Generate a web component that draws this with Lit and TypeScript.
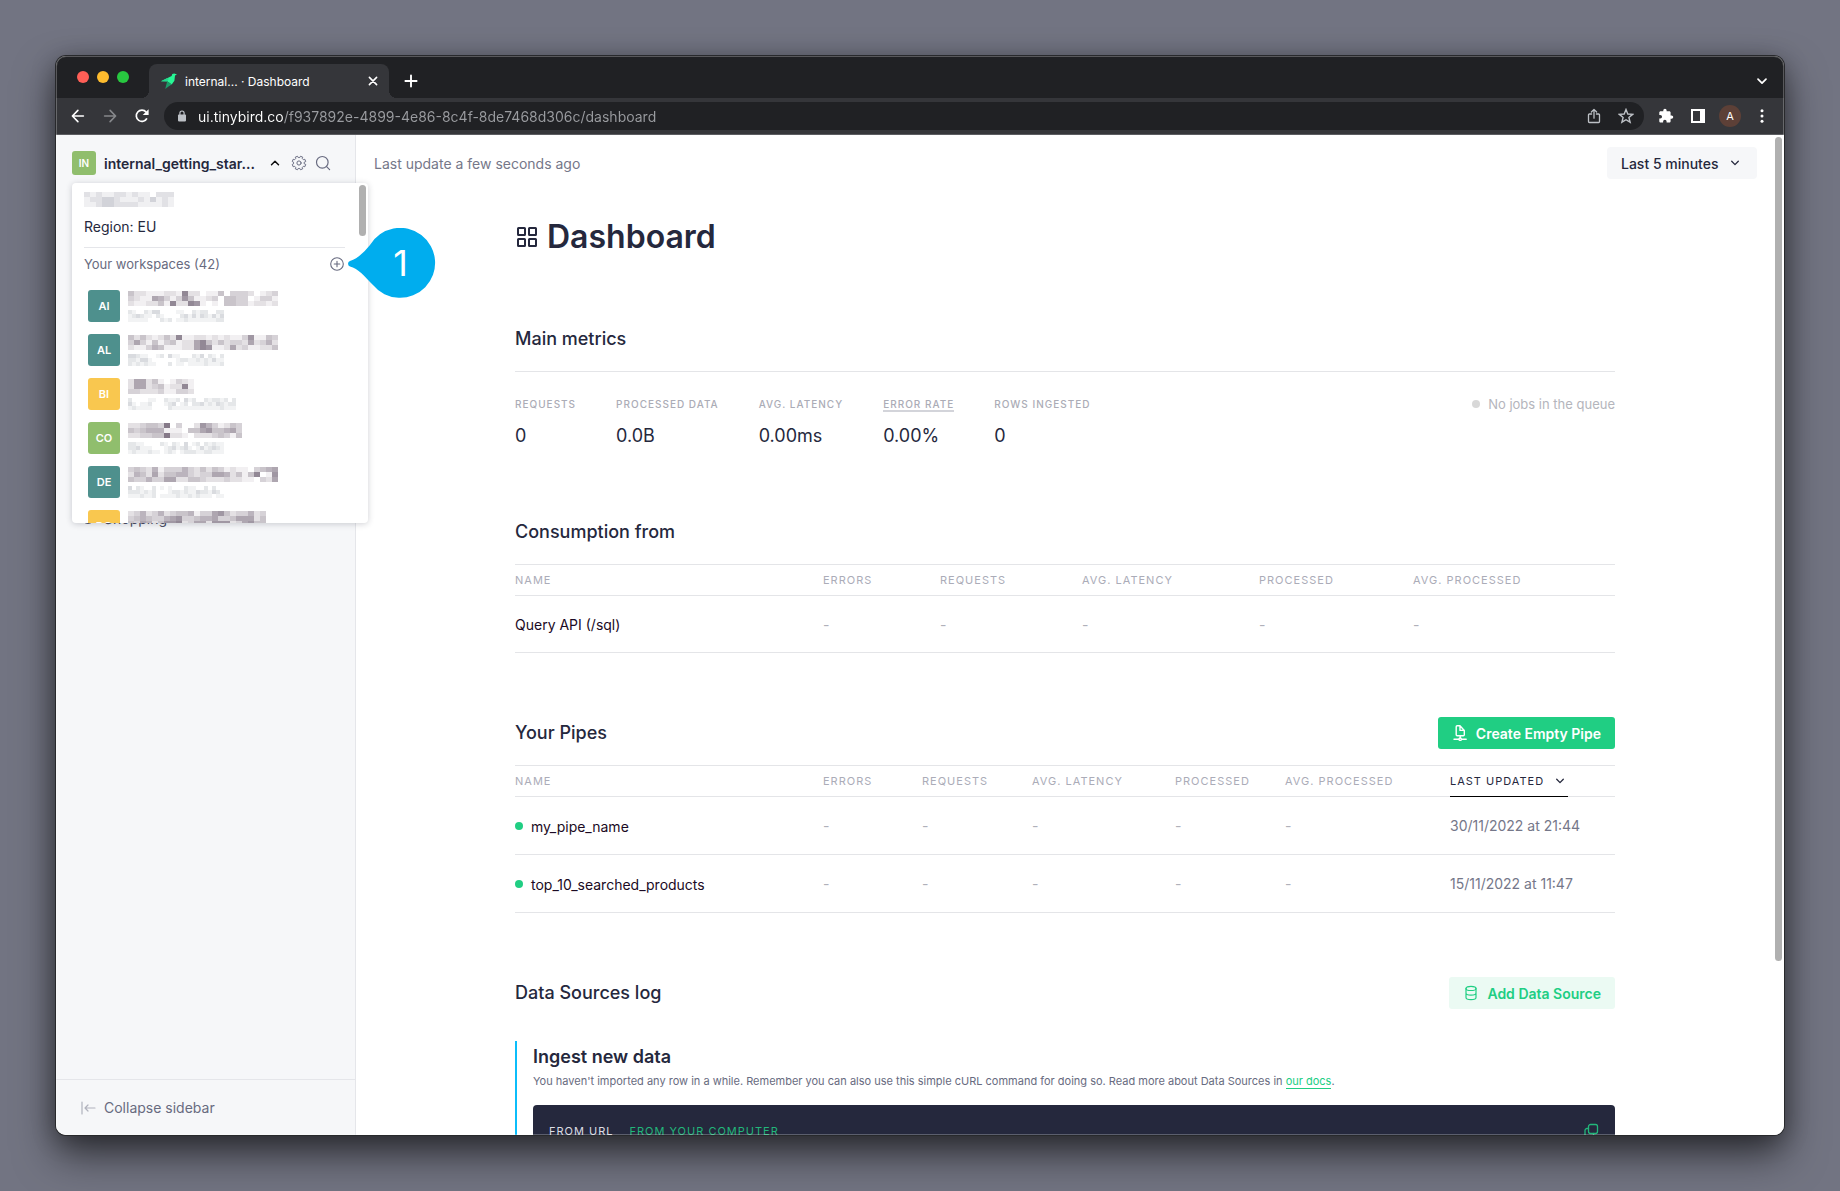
import { LitElement, html, css, svg, nothing } from "lit";
import { customElement, property } from "lit/decorators.js";

/* ---------- data ---------- */

interface Workspace {
  initials: string;
  tone: string;
  name: string[];
  detail: string[];
}

const workspaces: Workspace[] = [
  {
    initials: "AI",
    tone: "teal",
    name: ["4221112218220114033320123", "3211653137411230443301331", "2112241822871010443312212"],
    detail: ["210021330000110021220022", "123211021000023131321313", "111110002120112111111122"],
  },
  {
    initials: "AL",
    tone: "teal",
    name: ["4242124281122121211371143", "3631413412268424233262352", "2113541112268711262311224"],
    detail: ["332110012031100021302102", "221331000000122112121311", "212121100020110111121112"],
  },
  {
    initials: "BI",
    tone: "yellow",
    name: ["26624101321", "26623412281", "33222311332"],
    detail: ["200001100211203120021221202", "310112000123012022312132122", "121111000021111111111112111"],
  },
  {
    initials: "CO",
    tone: "green",
    name: ["2234439030027531243", "4345551110446744563", "2233449221022234314"],
    detail: ["221100002102103012021211", "223111000123123101312321", "121112110121012221122111"],
  },
  {
    initials: "DE",
    tone: "teal",
    name: ["3432513335324243121103456", "2542624455323366524148017", "4335336622443222322110326"],
    detail: ["302100201010002110020200", "222121200012212113221320", "111211201111211212111011"],
  },
  {
    initials: "DO",
    tone: "yellow",
    name: ["23523523445133674233523", "34543356733455633466624", "43652477823662777236744"],
    detail: ["302100201010002110020200", "222121200012212113221320", "111211201111211212111011"],
  },
];

const metrics = [
  { label: "Requests", value: "0" },
  { label: "Processed data", value: "0.0B" },
  { label: "Avg. latency", value: "0.00ms" },
  { label: "Error rate", value: "0.00%", hint: true },
  { label: "Rows ingested", value: "0" },
];

const consumptionColumns = [
  { label: "Name", share: 308 },
  { label: "Errors", share: 117 },
  { label: "Requests", share: 142 },
  { label: "Avg. latency", share: 177 },
  { label: "Processed", share: 154 },
  { label: "Avg. processed", share: 202 },
];

const pipeColumns = [
  { label: "Name", share: 308 },
  { label: "Errors", share: 99 },
  { label: "Requests", share: 110 },
  { label: "Avg. latency", share: 143 },
  { label: "Processed", share: 110 },
  { label: "Avg. processed", share: 165 },
  { label: "Last updated", share: 165, sorted: true },
];

const pipes = [
  { name: "my_pipe_name", updated: "30/11/2022 at 21:44" },
  { name: "top_10_searched_products", updated: "15/11/2022 at 11:47" },
];

/* ---------- icons ---------- */

const stroke = (body: unknown, size = 16, width = 1) => html`<svg
  class="icon" width=${size} height=${size} viewBox="0 0 16 16" fill="none" stroke="currentColor"
  stroke-width=${width} stroke-linecap="round" stroke-linejoin="round" aria-hidden="true">${body}</svg>`;
const solid = (body: unknown, size = 16) => html`<svg
  class="icon" width=${size} height=${size} viewBox="0 0 16 16" fill="currentColor" aria-hidden="true">${body}</svg>`;

const gearPath = (() => {
  const teeth = 8;
  const points: string[] = [];
  for (let i = 0; i < teeth; i++) {
    const base = ((i + 0.5) / teeth) * Math.PI * 2;
    for (const [offset, radius] of [[-0.25, 5.5], [-0.18, 6.9], [0.18, 6.9], [0.25, 5.5]]) {
      points.push(`${(8 + radius * Math.cos(base + offset)).toFixed(2)} ${(8 + radius * Math.sin(base + offset)).toFixed(2)}`);
    }
  }
  return `M${points.join("L")}Z`;
})();

const icons = {
  back: stroke(svg`<path d="M13.4 8H2.6M7.9 2.4L2.4 8l5.5 5.6"/>`, 16, 1.6),
  forward: stroke(svg`<path d="M2.6 8h10.8M8.1 2.4L13.6 8l-5.5 5.6"/>`, 16, 1.6),
  reload: html`<svg class="icon" width="16" height="16" viewBox="0 0 16 16" aria-hidden="true">
    <path d="M12.9 10.3A5.6 5.6 0 1 1 12.2 4.2" fill="none" stroke="currentColor" stroke-width="1.7"/>
    <path d="M14.6 1.2v5.9H8.7z" fill="currentColor"/></svg>`,
  lock: html`<svg class="icon" width="10" height="12" viewBox="0 0 10 12" aria-hidden="true">
    <rect x="1" y="4.6" width="8" height="6.8" rx=".8" fill="currentColor"/>
    <path d="M2.9 5V3.1a2.1 2.1 0 0 1 4.2 0V5" fill="none" stroke="currentColor" stroke-width="1.2"/></svg>`,
  close: stroke(svg`<path d="M4.4 4.4l7.2 7.2M11.6 4.4l-7.2 7.2"/>`, 16, 1.6),
  plus: stroke(svg`<path d="M8 2.4v11.2M2.4 8h11.2"/>`, 16, 1.9),
  chevronBold: stroke(svg`<path d="M4 6.2l4 4 4-4"/>`, 16, 1.7),
  chevronDown: stroke(svg`<path d="M4.7 6.3L8 9.6l3.3-3.3"/>`, 16, 1.3),
  chevronUp: stroke(svg`<path d="M4.5 9.8L8 6.3l3.5 3.5"/>`, 16, 1.5),
  share: stroke(svg`<path d="M5.6 6H3.4a.9.9 0 0 0-.9.9v6.7c0 .5.4.9.9.9h9.2c.5 0 .9-.4.9-.9V6.900a.9.9 0 0 0-.9-.9h-2.200M8 10.200V1.500M5.400 4L8 1.400 10.600 4"/>`, 16, 1.3),
  star: stroke(svg`<path stroke-linejoin="miter" d="M8 1.500l1.800 4.500 4.800.4-3.700 3.100 1.200 4.700L8 11.700l-4.100 2.500 1.200-4.700L1.400 6.400l4.800-.4z"/>`, 16, 1.4),
  puzzle: solid(svg`<path d="M13.600 7.400h-1V4.600c0-.7-.6-1.300-1.300-1.300H8.600v-1a1.650 1.650 0 0 0-3.300 0v1H2.600c-.7 0-1.300.6-1.300 1.300v2.500h1a1.750 1.750 0 0 1 0 3.500h-1v2.600c0 .7.6 1.300 1.300 1.300h2.500v-1a1.750 1.750 0 0 1 3.500 0v1h2.700c.7 0 1.300-.6 1.300-1.300v-2.500h1a1.650 1.650 0 0 0 0-3.300z"/>`),
  panel: html`<svg class="icon" width="14" height="14" viewBox="0 0 14 14" aria-hidden="true">
    <path d="M0 0h14v14H0zM2 2v10h7V2z" fill="currentColor" fill-rule="evenodd"/></svg>`,
  dots: solid(svg`<circle cx="8" cy="2.700" r="1.500"/><circle cx="8" cy="8" r="1.500"/><circle cx="8" cy="13.300" r="1.500"/>`),
  gear: stroke(svg`<path d=${gearPath}/><circle cx="8" cy="8" r="2.100"/>`, 16, 1),
  search: stroke(svg`<circle cx="7.300" cy="7.300" r="5.800"/><path d="M11.600 11.600L14.600 14.600"/>`, 16, 1.2),
  addCircle: stroke(svg`<circle cx="8" cy="8" r="6.300"/><path d="M8 5.200v5.600M5.200 8h5.600"/>`, 16, 1.1),
  node: stroke(svg`<circle cx="8" cy="8" r="5.500"/><path d="M5.500 8h5"/>`, 16, 1.1),
  collapse: stroke(svg`<path d="M2 2v12M15 8H5M8 5L5 8l3 3"/>`, 16, 1.2),
  grid: html`<svg class="icon" width="24" height="24" viewBox="0 0 24 24" fill="none" stroke="currentColor" stroke-width="2" aria-hidden="true">
    <rect x="3" y="3" width="7" height="7" rx=".5"/><rect x="14" y="3" width="7" height="7" rx=".5"/>
    <rect x="3" y="14" width="7" height="7" rx=".5"/><rect x="14" y="14" width="7" height="7" rx=".5"/></svg>`,
  pipe: stroke(svg`<path d="M12.300 5.400v4.400c0 .5-.4.900-.9.900H5.100a.9.900 0 0 1-.9-.9V1.700c0-.5.400-.9.900-.9h2.900zM8 .900v4.500h4.200M8.200 10.800v2.100M2 14.200h4.700M9.700 14.200h4.500"/><circle cx="8.200" cy="14.200" r="1.200"/>`, 16, 1.4),
  database: stroke(svg`<ellipse cx="8" cy="3.400" rx="5" ry="2.100"/><path d="M3 3.400v9.200c0 1.200 2.200 2.100 5 2.100s5-.9 5-2.100V3.400M3 8c0 1.200 2.200 2.100 5 2.100s5-.9 5-2.100"/>`, 16, 1.2),
  copy: stroke(svg`<rect x="5.500" y="1.500" width="9" height="9" rx="2"/><path d="M5.500 5.500H4a2 2 0 0 0-2 2V12a2 2 0 0 0 2 2h4.500a2 2 0 0 0 2-2v-1.500"/>`, 16, 1.3),
  bird: html`<svg class="icon" width="18" height="18" viewBox="0 0 18 18" aria-hidden="true">
    <path d="M1 9.200L11.600 4 12.300 2.100 14.200 1.400 17 2.400l-2 1.200-.6 5.200-2.700 3.800-4.500-3.400z" fill="#27f795"/>
    <path d="M7.200 9.200l4.500 3.400-3.200 1.800L5.200 17z" fill="#1d9a68"/>
    <path d="M1 9.200l6.400-3.100 1.400.6-1.600 2.800z" fill="#25d58c"/></svg>`,
};

/* ---------- mosaic ---------- */

@customElement("tb-mosaic")
class Mosaic extends LitElement {
  static styles = css`
    :host { display: block; line-height: 0; }
  `;

  @property({ attribute: false }) rows: string[] = [];
  @property({ type: Number }) cellWidth = 6;
  @property({ type: Number }) cellHeight = 5;
  @property() dark = "133,121,136";

  render() {
    const [cw, ch] = [this.cellWidth, this.cellHeight];
    const width = (this.rows[0]?.length ?? 0) * cw;
    return html`<svg width=${width} height=${this.rows.length * ch} shape-rendering="crispEdges" aria-hidden="true">
      ${this.rows.map((row, y) => [...row].map((level, x) => level === "0" ? nothing : svg`<rect
        x=${x * cw} y=${y * ch} width=${cw} height=${ch}
        fill=${`rgba(${this.dark},${Number(level) / 9})`}/>`))}
    </svg>`;
  }
}

/* ---------- browser frame ---------- */

const reset = css`
  * { box-sizing: border-box; }
  button, input, select {
    margin: 0; padding: 0; border: 0; background: none; color: inherit;
    font: inherit; letter-spacing: inherit; text-transform: inherit; outline: none;
  }
  button { display: inline-flex; align-items: center; cursor: pointer; }
  a { color: inherit; text-decoration: none; }
  h1, h2, h3, p, ul, dl, dd, dt { margin: 0; padding: 0; }
  ul { list-style: none; }
  .icon { display: block; flex: none; }
`;

@customElement("browser-chrome")
class BrowserChrome extends LitElement {
  static styles = [reset, css`
    :host { display: block; color: #fff; border-bottom: 1px solid #5c5d61; }
    .strip { display: flex; align-items: flex-end; height: 42px; background: #202124; padding: 0 14px 0 21px; }
    .lights { display: flex; gap: 8px; align-self: center; padding-right: 20px; }
    .light { width: 12px; height: 12px; border-radius: 50%; }
    .red { background: #ff5f57; }
    .amber { background: #febc2e; }
    .lime { background: #28c840; }
    .tab {
      position: relative; display: flex; align-items: center; width: 240px; height: 34px;
      padding: 0 8px 0 11px; border-radius: 8px 8px 0 0; background: #35363a; font-size: 12px;
    }
    .tab::before, .tab::after { content: ""; position: absolute; bottom: 0; width: 8px; height: 8px; }
    .tab::before { left: -8px; background: radial-gradient(circle at 0 0, #202124 8px, #35363a 8px); }
    .tab::after { right: -8px; background: radial-gradient(circle at 100% 0, #202124 8px, #35363a 8px); }
    .title { flex: 1; padding-left: 7px; white-space: nowrap; }
    .new { height: 34px; margin-left: 14px; }
    .tabs-menu { height: 34px; margin-left: auto; }
    .bar { display: flex; align-items: center; gap: 16px; height: 36px; padding: 0 14px; background: #35363a; }
    .dim { color: #86888b; }
    .address {
      flex: 1; display: flex; align-items: center; height: 28px; padding: 0 10px 0 13px;
      margin-left: -2px; border-radius: 14px; background: #202124; color: #bdc1c6; gap: 11px;
    }
    .url {
      flex: 1; min-width: 0; font-size: 14px; color: transparent;
      background: linear-gradient(90deg, #fff 86px, #9a9ca0 86px); background-clip: text; -webkit-background-clip: text;
    }
    .page-actions { display: flex; gap: 16px; }
    .page-actions button { width: 16px; justify-content: center; }
    .extensions { display: flex; align-items: center; gap: 16px; margin-left: -2px; }
    .extensions button { width: 16px; justify-content: center; }
    .extensions .avatar {
      width: 22px; height: 22px; margin: 0 -3px; border-radius: 50%; background: #5d4037; font-size: 11px;
    }
  `];

  render() {
    return html`
      <div class="strip">
        <div class="lights">
          <span class="light red"></span><span class="light amber"></span><span class="light lime"></span>
        </div>
        <div class="tab">
          ${icons.bird}
          <span class="title">internal... · Dashboard</span>
          <button aria-label="Close tab">${icons.close}</button>
        </div>
        <button class="new" aria-label="New tab">${icons.plus}</button>
        <button class="tabs-menu" aria-label="Search tabs">${icons.chevronBold}</button>
      </div>
      <div class="bar">
        <button aria-label="Back">${icons.back}</button>
        <button class="dim" aria-label="Forward">${icons.forward}</button>
        <button aria-label="Reload">${icons.reload}</button>
        <div class="address">
          ${icons.lock}
          <input class="url" type="text" aria-label="Address"
            value="ui.tinybird.co/f937892e-4899-4e86-8c4f-8de7468d306c/dashboard" />
          <div class="page-actions">
            <button aria-label="Share">${icons.share}</button>
            <button aria-label="Bookmark">${icons.star}</button>
          </div>
        </div>
        <div class="extensions">
          <button aria-label="Extensions">${icons.puzzle}</button>
          <button aria-label="Side panel">${icons.panel}</button>
          <button class="avatar" aria-label="Profile">A</button>
          <button aria-label="Menu">${icons.dots}</button>
        </div>
      </div>
    `;
  }
}

/* ---------- sidebar ---------- */

@customElement("tb-sidebar")
class Sidebar extends LitElement {
  static styles = [reset, css`
    :host {
      position: relative; z-index: 1; display: flex; flex-direction: column; flex: 0 0 299px;
      background: #f6f7f9; border-right: 1px solid #e5e6ea; color: #25283d; font-size: 14px;
    }
    .head { display: flex; align-items: center; height: 56px; padding: 0 16px; color: #686b80; }
    .badge {
      display: flex; align-items: center; justify-content: center; flex: none; width: 24px; height: 24px;
      border-radius: 3px; color: #fff; font-size: 10px; font-weight: 600;
    }
    .teal { background: #4e908d; }
    .yellow { background: #f9c74f; }
    .green { background: #90be6d; }
    .current { flex: none; gap: 8px; color: #25283d; font-weight: 600; }
    .current .icon { color: #111; }
    .current .label { width: 155px; text-align: left; white-space: nowrap; }
    .tools { display: flex; gap: 8px; margin-left: 8px; }
    .nav { flex: 1; padding: 311px 24px 0; }
    .nav a { display: flex; align-items: center; gap: 8px; height: 32px; color: #4a4d63; }
    .foot {
      display: flex; height: 56px; padding: 0 24px; border-top: 1px solid #e5e6ea; color: #686b80;
    }
    .foot button { gap: 8px; }
    .foot .icon { color: #b0b2bd; }

    .menu {
      position: absolute; top: 48px; left: 16px; width: 296px; height: 340px; overflow: hidden;
      display: flex; border-radius: 4px; background: #fff; box-shadow: 0 1px 6px rgba(37, 40, 61, .22);
    }
    .list { flex: 1; padding: 9px 0 0 12px; }
    .region { height: 40px; padding-top: 10px; line-height: 20px; }
    .group {
      display: flex; align-items: center; justify-content: space-between; height: 33px;
      border-top: 1px solid #e5e6ea; color: #686b80; font-size: 13px;
    }
    .items { display: flex; flex-direction: column; gap: 12px; padding: 10px 4px 0; }
    .item { gap: 8px; text-align: left; }
    .item .badge { width: 32px; height: 32px; font-size: 11px; }
    .lines { display: flex; flex-direction: column; gap: 4px; height: 30px; }
    .track { width: 23px; padding: 2px 2px 0 14px; }
    .thumb { width: 7px; height: 51px; border-radius: 4px; background: #b0b0b0; }

    .callout { position: absolute; top: 93px; left: 292px; width: 88px; height: 70px; }
    .callout svg { display: block; }
    .number {
      position: absolute; inset: 0 0 0 17px; display: flex; align-items: center; justify-content: center;
      color: #fff; font-size: 36px; font-weight: 400;
    }
  `];

  render() {
    return html`
      <div class="head">
        <button class="current" aria-expanded="true">
          <span class="badge green">IN</span>
          <span class="label">internal_getting_star...</span>
          ${icons.chevronUp}
        </button>
        <div class="tools">
          <button aria-label="Settings">${icons.gear}</button>
          <button aria-label="Search">${icons.search}</button>
        </div>
      </div>
      <nav class="nav"><a href="#">${icons.node}<span>Shopping</span></a></nav>
      <div class="foot"><button>${icons.collapse}<span>Collapse sidebar</span></button></div>

      <div class="menu">
        <div class="list">
          <tb-mosaic .rows=${["212112212110222", "122332111213121", "112332222111121"]} dark="120,122,140"></tb-mosaic>
          <p class="region">Region: EU</p>
          <div class="group">
            <span>Your workspaces (42)</span>
            <button aria-label="Create workspace">${icons.addCircle}</button>
          </div>
          <ul class="items">
            ${workspaces.map((w) => html`<li><button class="item" aria-label=${`Workspace ${w.initials}`}>
              <span class="badge ${w.tone}">${w.initials}</span>
              <span class="lines">
                <tb-mosaic .rows=${w.name}></tb-mosaic>
                <tb-mosaic .rows=${w.detail} .cellWidth=${4} .cellHeight=${4} dark="140,146,158"></tb-mosaic>
              </span>
            </button></li>`)}
          </ul>
        </div>
        <div class="track"><div class="thumb"></div></div>
      </div>

      <div class="callout">
        <svg width="88" height="70" viewBox="0 0 88 70" aria-hidden="true">
          <path fill="#00adee" d="M2 33C10 30.500 16 24 22 17A35 35 0 1 1 25 57C17 49 10 40 2 38.500A2.900 2.900 0 0 1 2 33Z"/>
        </svg>
        <span class="number">1</span>
      </div>
    `;
  }
}

/* ---------- dashboard ---------- */

interface Column { label: string; share: number; sorted?: boolean }

@customElement("tb-dashboard")
class Dashboard extends LitElement {
  static styles = [reset, css`
    :host { flex: 1; min-width: 0; display: flex; background: #fff; color: #25283d; font-size: 14px; overflow: hidden; }
    .page { flex: 1; min-width: 0; }
    .topbar { display: flex; align-items: center; justify-content: space-between; height: 56px; padding: 0 17px 0 18px; color: #757789; }
    .period { position: relative; display: flex; align-items: center; color: #25283d; font-weight: 500; }
    .period select {
      appearance: none; height: 32px; padding: 0 38px 0 14px; border-radius: 4px; background: #f6f7f9;
    }
    .period .icon { position: absolute; right: 14px; pointer-events: none; }
    .body { max-width: 1100px; margin: 0 auto; padding-top: 26px; }
    h1 { display: flex; align-items: center; gap: 8px; margin-bottom: 50px; font-size: 32px; line-height: 40px; font-weight: 600; }
    section { margin-bottom: 48px; }
    .section-head { display: flex; align-items: center; justify-content: space-between; height: 64px; }
    h2 { font-size: 18px; line-height: 24px; font-weight: 500; }
    .metrics { display: flex; justify-content: space-between; align-items: flex-start; padding: 26px 0 4px; border-top: 1px solid #e4e5e8; }
    dl { display: flex; gap: 40px; }
    dt { height: 14px; line-height: 12px; font-size: 10px; font-weight: 500; letter-spacing: 1px; text-transform: uppercase; color: #abacb6; }
    dt.hint { border-bottom: 2px solid #d3d4da; }
    dd { margin-top: 12px; font-size: 18px; line-height: 24px; }
    .queue { display: flex; align-items: center; gap: 8px; line-height: 12px; font-size: 13px; color: #b4b5bc; }
    .dot { flex: none; width: 8px; height: 8px; border-radius: 50%; background: #20ce83; }
    .queue .dot { background: #d8d8d8; }

    table { width: 100%; table-layout: fixed; border-spacing: 0; border-top: 1px solid #e4e5e8; }
    th, td { padding: 0; text-align: left; border-bottom: 1px solid #e4e5e8; white-space: nowrap; }
    th { height: 31px; font-size: 11px; font-weight: 400; letter-spacing: 1px; text-transform: uppercase; color: #abacb8; }
    td { height: 58px; color: #b0b1ba; }
    .single td { height: 57px; }
    .sort { gap: 8px; height: 31px; margin-bottom: -1px; border-bottom: 1px solid #000; color: #25283d; vertical-align: top; }
    .name { display: inline-flex; align-items: center; gap: 8px; color: #1b0a24; }
    td.date { color: #757789; }

    .action { gap: 8px; height: 32px; padding: 0 14px; border-radius: 3px; font-weight: 600; }
    .primary { background: #20ce83; color: #fff; }
    .soft { background: #ebfaf3; color: #20ce83; }

    .ingest { margin-top: 16px; padding: 4px 0 0 16px; border-left: 2px solid #0bbdfa; }
    h3 { font-size: 18px; line-height: 24px; font-weight: 600; }
    .ingest p { margin: 4px 0 16px; font-size: 11px; line-height: 16px; color: #686b80; }
    .ingest p a { color: #20ce83; border-bottom: 1px solid #20ce83; }
    .code {
      display: flex; align-items: flex-start; gap: 16px; height: 200px; padding: 18px 16px; border-radius: 4px;
      background: #25283d; color: #22b67a; font-size: 11px; line-height: 16px; letter-spacing: 1px; text-transform: uppercase;
    }
    .code .active { color: #dcdde3; }
    .code .copy { margin-left: auto; }
    .track { flex: none; width: 10px; padding-top: 2px; }
    .thumb { width: 7px; height: 824px; margin-left: 1px; border-radius: 4px; background: #b0b0b0; }
  `];

  private head(columns: Column[]) {
    const total = columns.reduce((sum, c) => sum + c.share, 0);
    return html`
      <colgroup>${columns.map((c) => html`<col style="width:${(c.share / total) * 100}%" />`)}</colgroup>
      <thead><tr>${columns.map((c) => html`<th scope="col">${c.sorted
        ? html`<button class="sort">${c.label}${icons.chevronDown}</button>` : c.label}</th>`)}</tr></thead>`;
  }

  render() {
    const blanks = [1, 2, 3, 4, 5];
    return html`
      <main class="page">
        <div class="topbar">
          <span>Last update a few seconds ago</span>
          <label class="period">
            <select aria-label="Time range"><option>Last 5 minutes</option></select>
            ${icons.chevronDown}
          </label>
        </div>
        <div class="body">
          <h1>${icons.grid}<span>Dashboard</span></h1>

          <section>
            <div class="section-head"><h2>Main metrics</h2></div>
            <div class="metrics">
              <dl>${metrics.map((m) => html`<div>
                <dt class=${m.hint ? "hint" : ""}>${m.label}</dt><dd>${m.value}</dd></div>`)}</dl>
              <span class="queue"><span class="dot"></span>No jobs in the queue</span>
            </div>
          </section>

          <section>
            <div class="section-head"><h2>Consumption from</h2></div>
            <table class="single">
              ${this.head(consumptionColumns)}
              <tbody><tr><td><a class="name" href="#">Query API (/sql)</a></td>${blanks.map(() => html`<td>-</td>`)}</tr></tbody>
            </table>
          </section>

          <section>
            <div class="section-head">
              <h2>Your Pipes</h2>
              <button class="action primary">${icons.pipe}<span>Create Empty Pipe</span></button>
            </div>
            <table>
              ${this.head(pipeColumns)}
              <tbody>${pipes.map((p) => html`<tr>
                <td><a class="name" href="#"><span class="dot"></span>${p.name}</a></td>
                ${blanks.map(() => html`<td>-</td>`)}
                <td class="date">${p.updated}</td></tr>`)}</tbody>
            </table>
          </section>

          <section>
            <div class="section-head">
              <h2>Data Sources log</h2>
              <button class="action soft">${icons.database}<span>Add Data Source</span></button>
            </div>
            <div class="ingest">
              <h3>Ingest new data</h3>
              <p>You haven't imported any row in a while. Remember you can also use this simple cURL command for doing so. Read more about Data Sources in <a href="#">our docs</a>.</p>
              <div class="code">
                <button class="active">From URL</button>
                <button>From your computer</button>
                <button class="copy" aria-label="Copy">${icons.copy}</button>
              </div>
            </div>
          </section>
        </div>
      </main>
      <div class="track"><div class="thumb"></div></div>
    `;
  }
}

/* ---------- root ---------- */

@customElement("app-root")
class AppRoot extends LitElement {
  static styles = css`
    :host {
      display: block; box-sizing: border-box; height: 100vh; padding: 56px; overflow: hidden;
      background: #727482; font-family: Inter, "Liberation Sans", sans-serif;
    }
    .window {
      position: relative; display: flex; flex-direction: column; height: 100%; overflow: hidden;
      border-radius: 10px; background: #fff;
      box-shadow: 0 0 0 1px #28292c, 0 20px 40px rgba(0, 0, 0, .55), 0 4px 24px rgba(0, 0, 0, .3);
    }
    .window::after {
      content: ""; position: absolute; inset: 0; z-index: 2; pointer-events: none;
      border: 1px solid rgba(255, 255, 255, .25); border-radius: 10px;
    }
    .app { flex: 1; min-height: 0; display: flex; }
  `;

  render() {
    return html`<div class="window">
      <browser-chrome></browser-chrome>
      <div class="app"><tb-sidebar></tb-sidebar><tb-dashboard></tb-dashboard></div>
    </div>`;
  }
}
